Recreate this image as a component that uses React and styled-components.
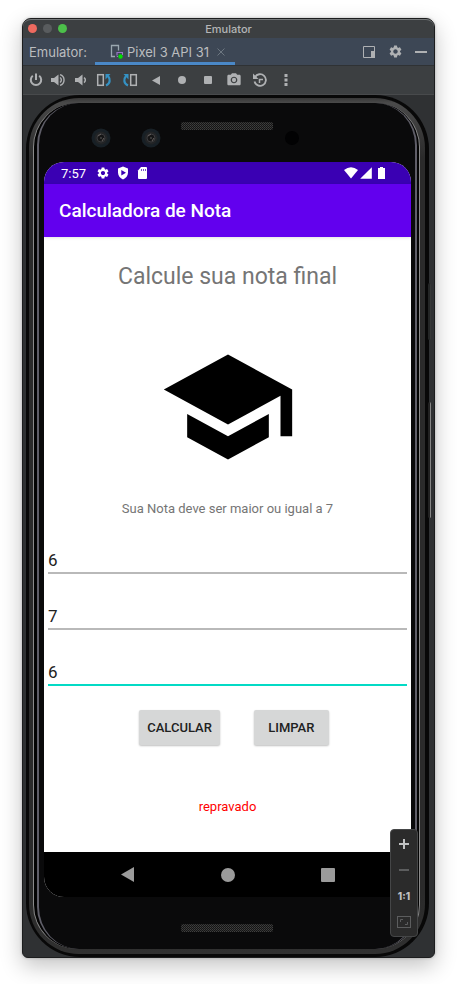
import React, { useState } from "react";
import styled, { createGlobalStyle } from "styled-components";
import { MdSettings, MdSchool, MdSignalCellular4Bar, MdCameraAlt } from "react-icons/md";

const GlobalStyle = createGlobalStyle`
  * { box-sizing: border-box; }
  body { margin: 0; background: #fff; }
  button, input { font: inherit; color: inherit; margin: 0; padding: 0; }
  svg { display: block; flex: none; }
`;

const Page = styled.div`
  padding: 18px 22px 26px;
  overflow: hidden;
`;

const EmulatorWindow = styled.div`
  position: relative;
  border: 1px solid #1c1d1e;
  border-radius: 9px 9px 6px 6px;
  background: #2f3133;
  box-shadow: 0 8px 22px rgba(0, 0, 0, 0.24), 0 0 3px rgba(0, 0, 0, 0.25);
  font-family: Inter, "Liberation Sans", sans-serif;
  color: #bbbdbf;
`;

const TitleBar = styled.header`
  position: relative;
  display: flex;
  align-items: center;
  justify-content: center;
  height: 19px;
  border-top: 1px solid #75787a;
  border-radius: 8px 8px 0 0;
  background: #3c3f41;
  font-size: 11px;
  font-weight: 500;
  color: #b4b6b7;
`;

const Lights = styled.div`
  position: absolute;
  left: 5px;
  top: 4px;
  display: flex;
  gap: 6px;
`;

const Light = styled.button`
  width: 9px;
  height: 9px;
  border: 0;
  border-radius: 50%;
  background: ${(p) => p.$color};
`;

const TabBar = styled.nav`
  display: flex;
  align-items: stretch;
  height: 28px;
  padding-left: 6px;
  border-bottom: 1px solid #2f3234;
  background: #3d4755;
  font-size: 13px;
`;

const TabLabel = styled.span`
  flex: none;
  width: 66px;
  line-height: 28px;
`;

const Tab = styled.button`
  display: flex;
  align-items: center;
  gap: 4px;
  width: 140px;
  padding: 3px 10px 0 15px;
  border: 0;
  border-bottom: 3px solid #4a88c7;
  background: none;
  white-space: nowrap;
`;

const Spacer = styled.div`
  flex: 1;
`;

const Toolbar = styled.div`
  display: flex;
  height: 29px;
  padding-left: 2px;
  border-bottom: 1px solid #484a4c;
  background: #3c3f41;
`;

const ToolButton = styled.button`
  display: flex;
  align-items: center;
  justify-content: center;
  width: ${(p) => (p.$narrow ? 22 : 26)}px;
  border: 0;
  background: none;
  color: #afb1b3;
`;

const PhoneShell = styled.div`
  position: relative;
  margin: 0 5px 0 3px;
  padding: 3px 4px 3px 3px;
  border-radius: 54px;
  background: #080808;
`;

const Rim = styled.div`
  padding: 5px 5px 5px 4px;
  border-radius: 50px;
  background: linear-gradient(#383838, #4a4a4a 5px, #2b2b2b 60px, #2b2b2b calc(100% - 60px), #303030);
`;

const RimEdge = styled.div`
  border: solid #8a8a8a;
  border-width: 0 1px;
  padding: 0 2px 0 3px;
  border-radius: 44px;
  background: #030303;
`;

const Face = styled.div`
  border: solid #5f5e68;
  border-width: 0 2px;
  padding: 0 4px 0 5px;
  border-radius: 42px;
  background: #0a0a0b;
`;

const TopBezel = styled.div`
  display: flex;
  justify-content: center;
  height: 59px;
`;

const BottomBezel = styled.div`
  display: flex;
  justify-content: center;
  height: 52px;
`;

const SideKey = styled.span`
  position: absolute;
  right: -2px;
  top: ${(p) => p.$top}px;
  width: 3px;
  height: ${(p) => p.$length}px;
  border-right: 1px solid ${(p) => (p.$lit ? "#858585" : "#363838")};
  border-radius: 2px;
  background: ${(p) => (p.$lit ? "#222" : "#242626")};
`;

const Screen = styled.main`
  overflow: hidden;
  border-radius: 20px;
  background: #fff;
  font-family: Roboto, sans-serif;
`;

const StatusBar = styled.div`
  display: flex;
  align-items: center;
  height: 22px;
  padding: 0 26px 0 17px;
  background: #3a00b3;
  color: #fff;
  font-size: 13px;
`;

const Notifications = styled.div`
  display: flex;
  align-items: center;
  gap: 7px;
  margin: 0 auto 0 10px;
`;

const Connectivity = styled.div`
  display: flex;
  align-items: center;
  gap: 1px;
  margin-right: 5px;
`;

const AppBar = styled.header`
  position: relative;
  padding: 15px 15px 14px;
  background: #6200ee;
  box-shadow: 0 1px 3px rgba(0, 0, 0, 0.12);
  color: #fff;
  font-size: 19px;
  line-height: 24px;
  font-weight: 500;
`;

const Form = styled.form`
  display: flex;
  flex-direction: column;
  align-items: center;
  padding: 24px 4px 35px;
  color: #757575;
`;

const Heading = styled.h1`
  margin: 0 0 44px;
  font-size: 23px;
  line-height: 32px;
  font-weight: 400;
`;

const Hint = styled.p`
  margin: 22px 0 27px;
  font-size: 13px;
  line-height: 20px;
`;

const Fields = styled.div`
  display: flex;
  flex-direction: column;
  gap: 28px;
  width: 100%;
`;

const GradeInput = styled.input`
  width: 100%;
  height: 28px;
  padding-top: 2px;
  border: 0;
  border-bottom: 2px solid ${(p) => (p.$active ? "#03dac5" : "#b9b9b9")};
  outline: 0;
  background: none;
  color: #212121;
  font-size: 17px;
  line-height: 24px;
`;

const Actions = styled.div`
  display: flex;
  gap: 34px;
  margin: 24px 0 52px;
  padding-left: 13px;
`;

const ActionButton = styled.button`
  min-width: 75px;
  height: 35px;
  padding: 0 8px;
  border: 0;
  border-radius: 2px;
  background: #d6d7d7;
  box-shadow: 0 1px 2px rgba(0, 0, 0, 0.25);
  color: #212121;
  font-size: 13px;
  font-weight: 500;
`;

const Result = styled.output`
  min-height: 20px;
  color: #ff0000;
  font-size: 13px;
  line-height: 20px;
`;

const NavBar = styled.nav`
  display: flex;
  align-items: center;
  justify-content: center;
  gap: 60px;
  height: 45px;
  background: #000;
`;

const NavButton = styled.button`
  display: flex;
  justify-content: center;
  width: 40px;
  border: 0;
  background: none;
  color: #9b9b9b;
`;

const ZoomPanel = styled.div`
  position: absolute;
  right: 16px;
  bottom: 20px;
  display: flex;
  flex-direction: column;
  width: 28px;
  padding: 1px 0;
  border: 1px solid #454647;
  border-radius: 4px;
  background: #2b2b2b;
`;

const ZoomButton = styled.button`
  display: flex;
  align-items: center;
  justify-content: center;
  height: 26px;
  border: 0;
  background: none;
  color: ${(p) => (p.$dim ? "#5c5d5e" : "#c0c1c2")};
  font-size: 10px;
  font-weight: 800;
`;

function Icon({ w = 16, h = 16, children }) {
  return (
    <svg width={w} height={h} viewBox={`0 0 ${w} ${h}`} fill="none" stroke="currentColor" aria-hidden="true">
      {children}
    </svg>
  );
}

const PowerIcon = () => (
  <Icon>
    <path d="M4.8 3.8A5.2 5.2 0 1 0 11.2 3.8M8 1.5V8" strokeWidth="2" />
  </Icon>
);

const VolumeIcon = ({ loud }) => (
  <Icon>
    <path d={loud ? "M1 6H4L8.5 2.5V13.5L4 10H1Z" : "M3 6H6L10.5 2.5V13.5L6 10H3Z"} fill="currentColor" stroke="none" />
    {loud ? (
      <path d="M10 5.5A3 3 0 0 1 10 10.5M10 2.7A5.5 5.5 0 0 1 10 13.3" strokeWidth="1.4" />
    ) : (
      <path d="M12 5.5A3 3 0 0 1 12 10.5" strokeWidth="1.5" />
    )}
  </Icon>
);

const RotateIcon = ({ right }) => (
  <Icon>
    <g transform={right ? "translate(16 0) scale(-1 1)" : undefined}>
      <rect x="1.7" y="2.7" width="5.6" height="10.6" strokeWidth="1.5" />
      <path d="M10 13.5C14.5 11.5 14.5 7 12 4" stroke="#3592c4" strokeWidth="2.2" />
      <path d="M9.5 2H14.5L9.5 7.5Z" fill="#3592c4" stroke="none" />
    </g>
  </Icon>
);

const HistoryIcon = () => (
  <Icon>
    <path d="M3 5.2A5.8 5.8 0 1 1 2.5 9.5" strokeWidth="1.8" />
    <path d="M1 1.5V7H6.5Z" fill="currentColor" stroke="none" />
    <path d="M7.5 11V7.5H11" strokeWidth="1.5" />
  </Icon>
);

const MoreIcon = () => (
  <Icon w={4} h={12}>
    <path d="M0.5 0H3.5V3H0.5ZM0.5 4.5H3.5V7.5H0.5ZM0.5 9H3.5V12H0.5Z" fill="currentColor" stroke="none" />
  </Icon>
);

const PlusIcon = () => (
  <Icon w={10} h={10}>
    <path d="M0 5H10M5 0V10" strokeWidth="2" />
  </Icon>
);

const MinusIcon = ({ w }) => (
  <Icon w={w} h={2}>
    <path d={`M0 1H${w}`} strokeWidth="2" />
  </Icon>
);

const Triangle = ({ w, h }) => (
  <Icon w={w} h={h}>
    <path d={`M0 ${h / 2}L${w} 0V${h}Z`} fill="currentColor" stroke="none" />
  </Icon>
);

const Dot = ({ size }) => (
  <Icon w={size} h={size}>
    <circle cx={size / 2} cy={size / 2} r={size / 2} fill="currentColor" stroke="none" />
  </Icon>
);

const Square = ({ size }) => (
  <Icon w={size} h={size}>
    <rect width={size} height={size} rx="1" fill="currentColor" stroke="none" />
  </Icon>
);

const DeviceIcon = () => (
  <Icon w={13} h={15}>
    <path d="M5 12.5H1.5V1.5H8.5V6.5" stroke="#9aa7b0" strokeWidth="1.3" />
    <path d="M8 12.5H6.8M7 11.5V8.5H12.5V11" stroke="#9876c5" strokeWidth="1.2" />
    <circle cx="10.5" cy="12.5" r="2.2" fill="#00e000" stroke="none" />
  </Icon>
);

const CloseIcon = () => (
  <Icon w={8} h={8}>
    <path d="M0.5 0.5L7.5 7.5M7.5 0.5L0.5 7.5" stroke="#6d7781" />
  </Icon>
);

const DockIcon = () => (
  <Icon w={12} h={12}>
    <path d="M0.5 0.5H11.5V11.5H0.5Z" />
    <path d="M8 5H12V12H8Z" fill="currentColor" stroke="none" />
  </Icon>
);

const ShieldIcon = () => (
  <Icon w={12} h={14}>
    <path d="M6 0.5L11 2.5V6.5C11 10 9 12 6 13.5C3 12 1 10 1 6.5V2.5Z" fill="currentColor" stroke="none" />
    <path d="M4.3 4L9 6.8L4.3 9.6Z" fill="#3a00b3" stroke="none" />
  </Icon>
);

const CardIcon = () => (
  <Icon w={12} h={12}>
    <path d="M5 0H10Q11 0 11 1V11Q11 12 10 12H3Q2 12 2 11V3.5Z" fill="currentColor" stroke="none" />
    <path d="M5.5 2V4M7.5 2V4M9.5 2V4" stroke="#3a00b3" strokeWidth="0.7" />
  </Icon>
);

const BatteryIcon = () => (
  <Icon w={7} h={12}>
    <path d="M2 0H5V1H7V12H0V1H2Z" fill="currentColor" stroke="none" />
  </Icon>
);

const WifiIcon = () => (
  <Icon w={14} h={12}>
    <path d="M0 3Q7 -2.5 14 3L7 11.5Z" fill="currentColor" stroke="none" />
  </Icon>
);

const FitIcon = () => (
  <Icon w={14} h={12}>
    <rect x="0.5" y="0.5" width="13" height="11" />
    <path d="M3.5 6V3.5H6M8 8.5H10.5V6" />
  </Icon>
);

const Mesh = ({ x, y }) => (
  <g>
    <defs>
      <pattern id={`mesh${y}`} width="2" height="2" patternUnits="userSpaceOnUse">
        <rect width="2" height="2" fill="#151515" />
        <rect width="1" height="1" fill="#404040" />
        <rect x="1" y="1" width="1" height="1" fill="#343434" />
      </pattern>
    </defs>
    <rect x={x} y={y} width="92" height="8" rx="2" fill={`url(#mesh${y})`} />
  </g>
);

const Lens = ({ cx }) => (
  <g>
    <circle cx={cx} cy="35" r="9.5" fill="#182026" />
    <circle cx={cx} cy="35" r="6.5" fill="#222426" />
    <circle cx={cx} cy="35" r="4" fill="#151516" stroke="#3b3b3d" />
    <path d={`M${cx - 3} 33L${cx} 31M${cx + 1} 38L${cx + 3} 35`} stroke="#67615e" />
    <circle cx={cx} cy="35" r="1" fill="#444" />
  </g>
);

const GRADE_NAMES = ["Nota 1", "Nota 2", "Nota 3"];

export default function App() {
  const [grades, setGrades] = useState(["6", "7", "6"]);
  const [active, setActive] = useState(2);
  const [result, setResult] = useState("repravado");

  const calculate = (event) => {
    event.preventDefault();
    const mean = grades.reduce((sum, g) => sum + Number(g), 0) / grades.length;
    setResult(mean >= 7 ? "aprovado" : "repravado");
  };

  const clear = () => {
    setGrades(["", "", ""]);
    setResult("");
  };

  return (
    <Page>
      <GlobalStyle />
      <EmulatorWindow>
        <TitleBar>
          <Lights>
            <Light $color="#ee6a5f" aria-label="Close window" />
            <Light $color="#595c5e" aria-label="Minimize window" />
            <Light $color="#4cc04a" aria-label="Zoom window" />
          </Lights>
          Emulator
        </TitleBar>
        <TabBar>
          <TabLabel>Emulator:</TabLabel>
          <Tab>
            <DeviceIcon />
            Pixel 3 API 31
            <Spacer />
            <CloseIcon />
          </Tab>
          <Spacer />
          <ToolButton aria-label="Dock"><DockIcon /></ToolButton>
          <ToolButton aria-label="Settings"><MdSettings size={15} /></ToolButton>
          <ToolButton aria-label="Hide"><MinusIcon w={12} /></ToolButton>
        </TabBar>
        <Toolbar>
          <ToolButton $narrow aria-label="Power"><PowerIcon /></ToolButton>
          <ToolButton $narrow aria-label="Volume up"><VolumeIcon loud /></ToolButton>
          <ToolButton $narrow aria-label="Volume down"><VolumeIcon /></ToolButton>
          <ToolButton aria-label="Rotate left"><RotateIcon /></ToolButton>
          <ToolButton aria-label="Rotate right"><RotateIcon right /></ToolButton>
          <ToolButton aria-label="Back"><Triangle w={8} h={9} /></ToolButton>
          <ToolButton aria-label="Home"><Dot size={8} /></ToolButton>
          <ToolButton aria-label="Overview"><Square size={8} /></ToolButton>
          <ToolButton aria-label="Screenshot"><MdCameraAlt size={16} /></ToolButton>
          <ToolButton aria-label="Snapshots"><HistoryIcon /></ToolButton>
          <ToolButton aria-label="More"><MoreIcon /></ToolButton>
        </Toolbar>
        <PhoneShell>
          <SideKey $top={188} $length={57} />
          <SideKey $top={307} $length={116} $lit />
          <Rim>
            <RimEdge>
              <Face>
                <TopBezel>
                  <svg width="367" height="59" viewBox="0 0 367 59" fill="none" aria-hidden="true">
                    <Lens cx={57} />
                    <Lens cx={107} />
                    <Mesh x={137} y={19} />
                    <circle cx="248" cy="35" r="7" fill="#020203" />
                  </svg>
                </TopBezel>
                <Screen>
                  <StatusBar>
                    7:57
                    <Notifications>
                      <MdSettings size={14} />
                      <ShieldIcon />
                      <CardIcon />
                    </Notifications>
                    <Connectivity>
                      <WifiIcon />
                      <MdSignalCellular4Bar size={14} />
                    </Connectivity>
                    <BatteryIcon />
                  </StatusBar>
                  <AppBar>Calculadora de Nota</AppBar>
                  <Form onSubmit={calculate}>
                    <Heading>Calcule sua nota final</Heading>
                    <MdSchool size={140} color="#000" />
                    <Hint>Sua Nota deve ser maior ou igual a 7</Hint>
                    <Fields>
                      {GRADE_NAMES.map((name, i) => (
                        <GradeInput
                          key={name}
                          aria-label={name}
                          inputMode="decimal"
                          value={grades[i]}
                          $active={active === i}
                          onFocus={() => setActive(i)}
                          onChange={(e) => setGrades(grades.map((g, j) => (j === i ? e.target.value : g)))}
                        />
                      ))}
                    </Fields>
                    <Actions>
                      <ActionButton type="submit">CALCULAR</ActionButton>
                      <ActionButton type="button" onClick={clear}>LIMPAR</ActionButton>
                    </Actions>
                    <Result>{result}</Result>
                  </Form>
                  <NavBar>
                    <NavButton aria-label="Voltar"><Triangle w={13} h={15} /></NavButton>
                    <NavButton aria-label="Início"><Dot size={14} /></NavButton>
                    <NavButton aria-label="Recentes"><Square size={14} /></NavButton>
                  </NavBar>
                </Screen>
                <BottomBezel>
                  <svg width="367" height="52" viewBox="0 0 367 52" fill="none" aria-hidden="true">
                    <Mesh x={137} y={27} />
                  </svg>
                </BottomBezel>
              </Face>
            </RimEdge>
          </Rim>
        </PhoneShell>
        <ZoomPanel>
          <ZoomButton aria-label="Zoom in"><PlusIcon /></ZoomButton>
          <ZoomButton $dim aria-label="Zoom out"><MinusIcon w={10} /></ZoomButton>
          <ZoomButton>1:1</ZoomButton>
          <ZoomButton $dim aria-label="Fit to window"><FitIcon /></ZoomButton>
        </ZoomPanel>
      </EmulatorWindow>
    </Page>
  );
}
